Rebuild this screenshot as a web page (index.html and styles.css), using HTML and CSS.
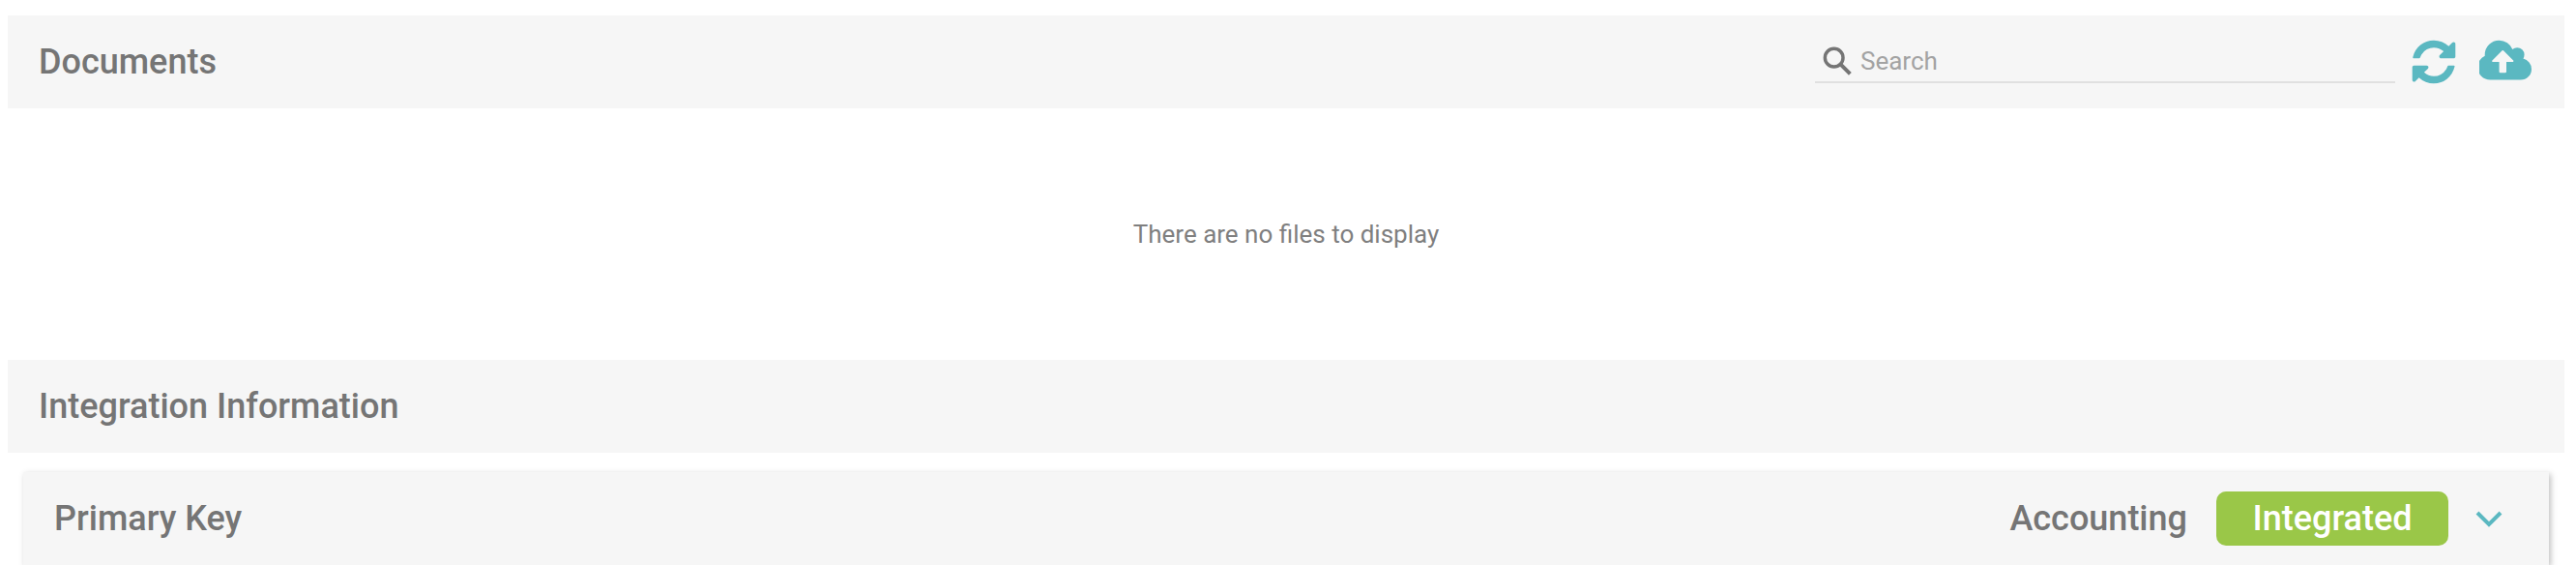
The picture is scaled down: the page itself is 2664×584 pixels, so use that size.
FILE: index.html
```html
<!DOCTYPE html>
<html lang="en">
<head>
  <meta charset="UTF-8" />
  <title>Documents</title>
  <link rel="stylesheet" href="styles.css">
</head>
<body>
  <header class="section-bar">
    <h2>Documents</h2>
    <div class="bar-tools">
      <label class="search">
        <svg class="search-icon" viewBox="0 0 24 24"><circle cx="9.5" cy="9.5" r="7" fill="none" stroke="#757575" stroke-width="2.6"/><path d="M14.5 14.5L22 22" stroke="#757575" stroke-width="3"/></svg>
        <input type="text" placeholder="Search" />
      </label>
      <svg class="icon-refresh" viewBox="0 0 1792 1792"><path d="M1639 1056q0 5-1 7-64 268-268 434.5t-478 166.5q-146 0-282.5-55t-243.5-157l-129 129q-19 19-45 19t-45-19-19-45v-448q0-26 19-45t45-19h448q26 0 45 19t19 45-19 45l-137 137q71 66 161 102t187 36q134 0 250-65t186-179q11-17 53-117 8-23 30-23h192q13 0 22.5 9.5t9.5 22.5zm25-800v448q0 26-19 45t-45 19h-448q-26 0-45-19t-19-45 19-45l138-138q-148-137-349-137-134 0-250 65t-186 179q-11 17-53 117-8 23-30 23h-199q-13 0-22.5-9.5t-9.5-22.5v-7q65-268 270-434.5t480-166.5q146 0 284 55.5t245 156.5l130-129q19-19 45-19t45 19 19 45z"/></svg>
      <svg class="icon-upload" viewBox="0 0 1920 1792"><path d="M1216 864q0-14-9-23l-352-352q-9-9-23-9t-23 9l-351 351q-10 12-10 24 0 14 9 23t23 9h224v352q0 13 9.5 22.5t22.5 9.5h192q13 0 22.5-9.5t9.5-22.5v-352h224q13 0 22.5-9.5t9.5-22.5zm640 288q0 159-112.5 271.5t-271.5 112.5h-1088q-185 0-316.5-131.5t-131.5-316.5q0-130 70-240t188-165q-2-30-2-43 0-212 150-362t362-150q156 0 285.5 87t188.5 231q71-62 166-62 106 0 181 75t75 181q0 76-41 138 130 31 213.5 135.5t83.5 238.5z"/></svg>
    </div>
  </header>

  <div class="empty">There are no files to display</div>

  <header class="section-bar">
    <h2>Integration Information</h2>
  </header>

  <section class="card">
    <div class="card-head">
      <h3>Primary Key</h3>
      <div class="card-status">
        <span class="system">Accounting</span>
        <span class="badge">Integrated</span>
        <svg class="chevron" viewBox="0 0 28 18"><path d="M2 3l12 12L26 3" fill="none" stroke="#5bb8c1" stroke-width="4"/></svg>
      </div>
    </div>
  </section>
</body>
</html>
```

FILE: styles.css
```css
* { box-sizing: border-box; }

html, body {
  margin: 0;
  height: 100%;
  overflow: hidden;
  background: #fff;
}

body {
  padding: 16px 12px 0 8px;
  font-family: Roboto, "Liberation Sans", sans-serif;
  color: #757575;
}

.section-bar {
  height: 96px;
  padding: 0 32px;
  background: #f6f6f6;
  display: flex;
  align-items: center;
  justify-content: space-between;
}

.section-bar h2 {
  margin: 0;
  font-size: 36px;
  font-weight: 500;
}

.bar-tools {
  display: flex;
  align-items: center;
}

.search {
  width: 600px;
  height: 44px;
  padding: 0 8px 0 7px;
  display: flex;
  align-items: center;
  gap: 8px;
  border-bottom: 2px solid #e0e0e0;
}

.search-icon {
  width: 32px;
  height: 32px;
  flex: none;
}

.search input {
  flex: 1;
  border: none;
  background: none;
  outline: none;
  padding: 0;
  font: 26px Roboto, "Liberation Sans", sans-serif;
  color: #757575;
}

.search input::placeholder {
  color: #a3a3a3;
  opacity: 1;
}

.icon-refresh {
  width: 52px;
  height: 52px;
  margin-left: 14px;
  fill: #5bb8c1;
}

.icon-upload {
  width: 56px;
  height: 52px;
  margin-left: 21px;
  fill: #5bb8c1;
}

.empty {
  height: 260px;
  display: flex;
  align-items: center;
  justify-content: center;
  font-size: 26px;
  color: #7f7f7f;
}

.card {
  margin: 20px 16px 0;
  background: #f6f6f6;
  box-shadow: 2px 2px 6px rgba(0, 0, 0, 0.25);
}

.card-head {
  height: 96px;
  padding: 0 48px 0 32px;
  display: flex;
  align-items: center;
  justify-content: space-between;
}

.card-head h3 {
  margin: 0;
  font-size: 36px;
  font-weight: 500;
}

.card-status {
  display: flex;
  align-items: center;
}

.system {
  font-size: 36px;
  font-weight: 500;
  color: #757575;
}

.badge {
  width: 240px;
  height: 56px;
  margin-left: 30px;
  display: flex;
  align-items: center;
  justify-content: center;
  border-radius: 10px;
  background: #9ac748;
  color: #fff;
  font-size: 36px;
  font-weight: 500;
}

.chevron {
  width: 28px;
  height: 18px;
  margin-left: 28px;
}
```
